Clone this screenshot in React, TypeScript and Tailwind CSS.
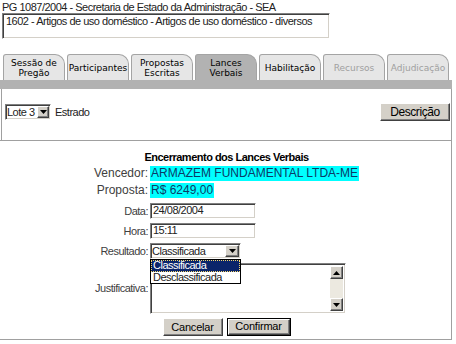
import React from "react";

const tabs = [
  { label: ["Sessão de", "Pregão"], state: "normal" },
  { label: ["Participantes"], state: "normal" },
  { label: ["Propostas", "Escritas"], state: "normal" },
  { label: ["Lances", "Verbais"], state: "active" },
  { label: ["Habilitação"], state: "normal" },
  { label: ["Recursos"], state: "disabled" },
  { label: ["Adjudicação"], state: "disabled" },
];

const sunken =
  "border border-t-[#808080] border-l-[#808080] border-r-white border-b-white shadow-[inset_1px_1px_0_#404040,inset_-1px_-1px_0_#d4d0c8]";

const raised =
  "bg-[#d4d0c8] border border-t-white border-l-white border-r-[#404040] border-b-[#404040] shadow-[inset_-1px_-1px_0_#808080]";

function ArrowBox({ up = false, className = "" }: { up?: boolean; className?: string }) {
  return (
    <div className={`${raised} flex items-center justify-center ${className}`}>
      <svg width="7" height="4" viewBox="0 0 7 4">
        {up ? (
          <path d="M3.5 0 L7 4 L0 4 Z" fill="#000" />
        ) : (
          <path d="M0 0 L7 0 L3.5 4 Z" fill="#000" />
        )}
      </svg>
    </div>
  );
}

function Select({ value, width, arrow = "w-[14px]" }: { value: string; width: string; arrow?: string }) {
  return (
    <div className={`${sunken} bg-white h-[16px] flex items-center ${width}`}>
      <span className="flex-1 pl-[1px] leading-[12px] whitespace-nowrap">{value}</span>
      <ArrowBox className={`${arrow} h-[12px] mr-[1px] shrink-0`} />
    </div>
  );
}

function Row({ label, children, className = "" }: { label: string; children: React.ReactNode; className?: string }) {
  return (
    <div className={`flex items-center ${className}`}>
      <span className="w-[150px] text-right pr-[2px] text-[#404040]">{label}</span>
      {children}
    </div>
  );
}

export default function App() {
  return (
    <div
      className="w-[456px] h-[344px] bg-white text-[11px] tracking-[-0.5px] text-[#222] overflow-hidden leading-[15px]"
      style={{ fontFamily: '"Liberation Sans", Arial, sans-serif' }}
    >
      <div className="pl-[2px] pt-[1px] leading-[12px]">
        PG 1087/2004 - Secretaria de Estado da Administração - SEA
      </div>
      <div className={`${sunken} bg-white ml-[2px] w-[328px] h-[26px] px-[3px] pt-[1px] leading-[13px]`}>
        1602 - Artigos de uso doméstico - Artigos de uso doméstico - diversos
      </div>

      {/* tabs */}
      <div
        className="flex gap-[2px] pl-[3px] mt-[14px] h-[27px] items-end tracking-normal"
        style={{ fontFamily: '"DejaVu Sans", Verdana, sans-serif' }}
      >
        {tabs.map((t) => (
          <div
            key={t.label.join(" ")}
            className={`w-[62px] h-[26px] border border-b-0 border-[#a4a4a4] rounded-tl-[3px] rounded-tr-[10px] flex flex-col items-center justify-center text-[9px] leading-[10px] ${
              t.state === "active" ? "bg-[#b2b2b2]" : "bg-[#e6e6e6]"
            } ${t.state === "disabled" ? "text-[#a0a0a0]" : "text-black"}`}
          >
            {t.label.map((l) => (
              <span key={l}>{l}</span>
            ))}
          </div>
        ))}
      </div>
      <div className="w-[452px] h-[9px] bg-[#b2b2b2]" />

      {/* upper panel */}
      <div className="ml-[1px] w-[451px] h-[51px] border-l border-r border-[#a0a0a0] flex items-start justify-between pl-[3px] pr-[1px] pt-[14px]">
        <div className="flex items-center gap-[4px] mt-[1px]">
          <Select value="Lote 3" width="w-[46px]" arrow="w-[12px]" />
          <span>Estrado</span>
        </div>
        <button className={`${raised} w-[70px] h-[18px] text-[12px] tracking-[-0.4px] leading-[14px] text-black`}>
          Descrição
        </button>
      </div>

      {/* lower section */}
      <div className="w-[452px] h-[200px] border-t border-r border-b border-[#a0a0a0] flex flex-col">
        <div className="text-center font-bold leading-[12px] mt-[10px] text-black pl-[2px]">
          Encerramento dos Lances Verbais
        </div>
        <Row label="Vencedor:" className="text-[12px] tracking-normal mt-[3px] h-[15px]">
          <span className="bg-[#00ffff] text-[#0b3a66] leading-[15px] px-[1px]">ARMAZEM FUNDAMENTAL LTDA-ME</span>
        </Row>
        <Row label="Proposta:" className="text-[12px] tracking-normal mt-[2px] h-[15px]">
          <span className="bg-[#00ffff] text-[#0b3a66] leading-[15px] px-[1px]">R$ 6249,00</span>
        </Row>
        <Row label="Data:" className="mt-[5px] h-[16px]">
          <div className={`${sunken} bg-white w-[106px] h-[16px] pl-[2px] leading-[13px]`}>24/08/2004</div>
        </Row>
        <Row label="Hora:" className="mt-[4px] h-[16px]">
          <div className={`${sunken} bg-white w-[106px] h-[16px] pl-[2px] leading-[13px]`}>15:11</div>
        </Row>
        <Row label="Resultado:" className="mt-[4px] h-[16px] relative z-10">
          <div className="relative">
            <Select value="Classificada" width="w-[91px]" />
            <div className="absolute left-0 top-full w-[91px] h-[25px] border border-black bg-white leading-[11px]">
              <div className="bg-[#0a246a] text-white pl-[2px] h-[12px] outline-1 outline-dotted outline-[#f5d76e] -outline-offset-1">
                Classificada
              </div>
              <div className="pl-[2px] h-[12px]">Desclassificada</div>
            </div>
          </div>
        </Row>
        <Row label="Justificativa:" className="mt-[4px] h-[51px]">
          <div className={`${sunken} bg-white w-[196px] h-[51px] flex justify-end p-[2px]`}>
            <div className="w-[13px] h-full bg-[#ece9e0] flex flex-col justify-between">
              <ArrowBox up className="w-[13px] h-[13px]" />
              <ArrowBox className="w-[13px] h-[13px]" />
            </div>
          </div>
        </Row>
        <div className="flex justify-center gap-[4px] mt-[4px] tracking-[-0.2px] pl-[2px]">
          <button className={`${raised} w-[60px] h-[18px] leading-[14px] text-black`}>Cancelar</button>
          <button className="w-[64px] h-[18px] border border-black">
            <div className={`${raised} w-full h-full leading-[13px] text-black`}>Confirmar</div>
          </button>
        </div>
      </div>
    </div>
  );
}
